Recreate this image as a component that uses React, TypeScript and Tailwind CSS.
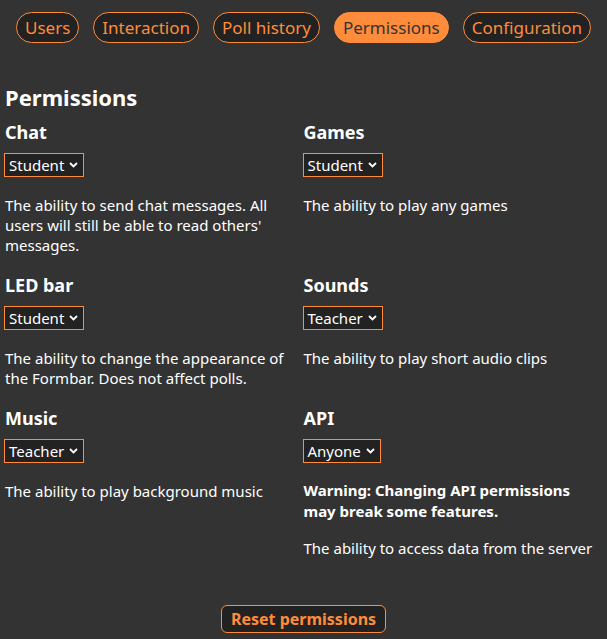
import React from 'react';

const tabs = ['Users', 'Interaction', 'Poll history', 'Permissions', 'Configuration'];

interface Perm {
  name: string;
  level: string;
  desc: string;
  warning?: string;
}

const perms: Perm[] = [
  { name: 'Chat', level: 'Student', desc: "The ability to send chat messages. All users will still be able to read others' messages." },
  { name: 'Games', level: 'Student', desc: 'The ability to play any games' },
  { name: 'LED bar', level: 'Student', desc: 'The ability to change the appearance of the Formbar. Does not affect polls.' },
  { name: 'Sounds', level: 'Teacher', desc: 'The ability to play short audio clips' },
  { name: 'Music', level: 'Teacher', desc: 'The ability to play background music' },
  {
    name: 'API',
    level: 'Anyone',
    desc: 'The ability to access data from the server',
    warning: 'Warning: Changing API permissions may break some features.',
  },
];

const Chevron = () => (
  <svg width="9" height="6" viewBox="0 0 9 6" className="ml-[5px]">
    <path d="M1 1l3.5 3.5L8 1" fill="none" stroke="white" strokeWidth="1.8" />
  </svg>
);

const PermCell: React.FC<{ perm: Perm }> = ({ perm }) => (
  <div className="pr-[4px]">
    <h3 className="text-[18px] leading-[24px] font-bold text-white">{perm.name}</h3>
    <div className="mt-[9px] -ml-[1px] inline-flex h-[24px] items-center border border-[#ff8c3a] bg-[#222222] pl-[4px] pr-[5px] text-[15px] text-white">
      <span>{perm.level}</span>
      <Chevron />
    </div>
    {perm.warning && (
      <p className="mt-[17px] text-[15px] leading-[21px] font-bold text-white">{perm.warning}</p>
    )}
    <p className={`${perm.warning ? 'mt-[16px]' : 'mt-[18px]'} text-[15px] leading-[20px] text-white`}>{perm.desc}</p>
  </div>
);

export default function App() {
  return (
    <div
      className="min-h-[639px] w-full bg-[#333333] pt-[12px] pb-[7px]"
      style={{ fontFamily: '"Noto Sans", "Open Sans", sans-serif' }}
    >
      {/* Tabs */}
      <div className="flex justify-center gap-[14px]">
        {tabs.map((t) =>
          t === 'Permissions' ? (
            <div
              key={t}
              className="flex h-[31px] items-center whitespace-nowrap rounded-full border border-[#ff8c3a] bg-[#ff8c3a] px-[8px] text-[17px] text-[#333333]"
            >
              {t}
            </div>
          ) : (
            <div
              key={t}
              className="flex h-[31px] items-center whitespace-nowrap rounded-full border border-[#ff8c3a] bg-[#222222] px-[8px] text-[17px] text-[#ff8c3a]"
            >
              {t}
            </div>
          )
        )}
      </div>

      <div className="px-[5px]">
        <h2 className="mt-[40px] text-[22px] leading-[28px] font-bold text-white">Permissions</h2>
        <div className="mt-[9px] grid grid-cols-2 gap-y-[18px]">
          {perms.map((p) => (
            <PermCell key={p.name} perm={p} />
          ))}
        </div>
      </div>

      <div className="mt-[47px] flex justify-center">
        <button className="h-[28px] whitespace-nowrap rounded-[6px] border border-[#ff8c3a] bg-[#222222] px-[9px] text-[16px] font-bold text-[#ff8c3a]">
          Reset permissions
        </button>
      </div>
    </div>
  );
}
